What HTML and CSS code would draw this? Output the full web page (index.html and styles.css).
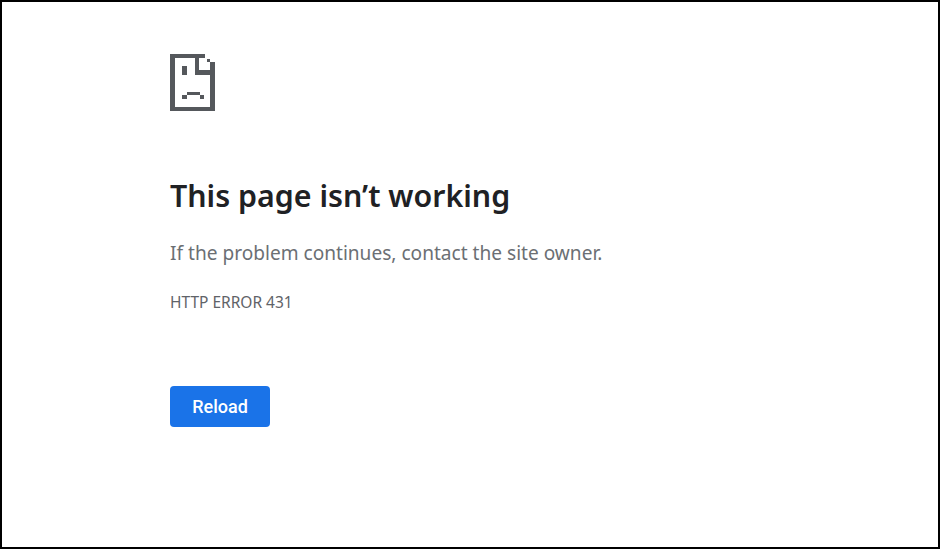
FILE: index.html
```html
<!DOCTYPE html>
<html lang="en">
<head>
    <meta charset="UTF-8">
    <meta name="viewport" content="width=device-width, initial-scale=1.0">
    <title>This page isn't working</title>
    <link rel="stylesheet" href="styles.css">
</head>
<body>
    <!-- Error Frame -->
    <div class="frame">
        <div class="content">
            <!-- Sad Document Icon -->
            <svg class="icon" width="45" height="57" viewBox="0 0 45 57" shape-rendering="crispEdges" fill="#55585c">
                <rect x="0" y="0" width="35" height="4"/>
                <rect x="0" y="0" width="5" height="57"/>
                <rect x="0" y="53" width="45" height="4"/>
                <rect x="40" y="8" width="5" height="49"/>
                <rect x="25" y="0" width="4" height="21"/>
                <rect x="25" y="16" width="20" height="5"/>
                <rect x="37" y="5" width="3" height="3"/>
                <rect x="12" y="12" width="5" height="9"/>
                <rect x="17" y="38" width="13" height="3"/>
                <rect x="12" y="41" width="5" height="4"/>
                <rect x="30" y="41" width="4" height="4"/>
            </svg>

            <h1>This page isn’t working</h1>
            <p class="message">If the problem continues, contact the site owner.</p>
            <div class="code">HTTP ERROR 431</div>
            <button class="reload">Reload</button>
        </div>
    </div>
</body>
</html>
```

FILE: styles.css
```css
body {
    margin: 0;
    padding: 0;
    background-color: #fff;
    font-family: "Noto Sans", "Open Sans", sans-serif;
}

.frame {
    box-sizing: border-box;
    width: 940px;
    height: 549px;
    padding: 52px 0 0 168px;
    background-color: #fff;
    border: 2px solid #000;
}

.content {
    display: flex;
    flex-direction: column;
    align-items: flex-start;
}

.icon {
    display: block;
}

h1 {
    margin: 65px 0 0;
    color: #202124;
    font-size: 30.35px;
    font-weight: 600;
    line-height: 40px;
}

.message {
    margin: 24px 0 0;
    color: #6b6f74;
    font-size: 19.1px;
    line-height: 26px;
}

.code {
    margin: 26px 0 0;
    color: #5f6368;
    font-size: 15.5px;
    line-height: 20px;
}

.reload {
    margin: 74px 0 0;
    width: 100px;
    height: 41px;
    padding: 0;
    background-color: #1a73e8;
    color: #fff;
    border: none;
    border-radius: 4px;
    font-family: Roboto, sans-serif;
    font-size: 18px;
    font-weight: 500;
    cursor: pointer;
}
```
